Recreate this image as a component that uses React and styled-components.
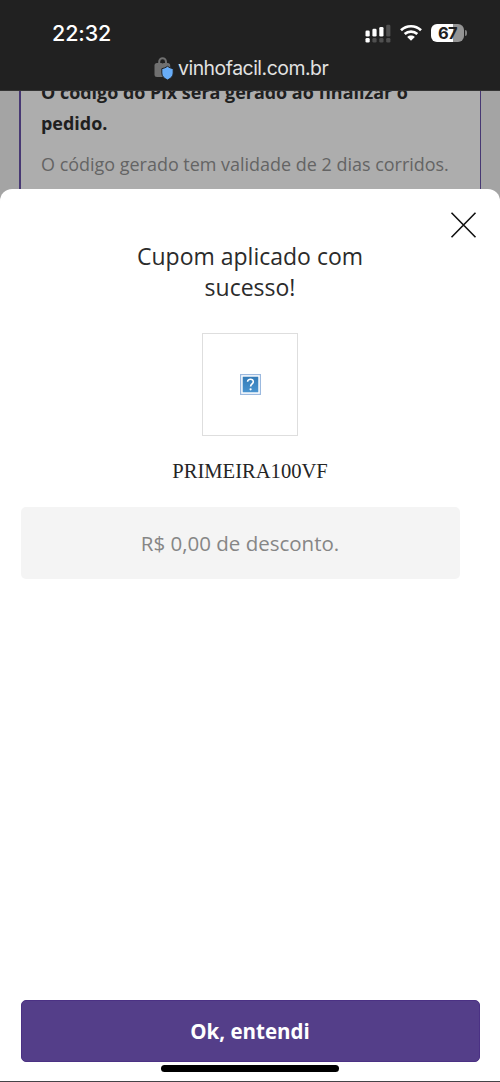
import React from "react";
import styled, { createGlobalStyle } from "styled-components";

const GlobalStyle = createGlobalStyle`
  * { box-sizing: border-box; }
  body { margin: 0; background: #fff; font-family: "Open Sans", sans-serif; }
  h2, p { margin: 0; }
`;

const Screen = styled.div`
  width: 500px;
  height: 1082px;
  display: flex;
  flex-direction: column;
  overflow: hidden;
  background: #a4a4a4;
  border-bottom: 1px solid #444347;
`;

const BrowserHeader = styled.header`
  flex: none;
  height: 91px;
  background: #212121;
  border-bottom: 1px solid #343434;
  font-family: Inter, sans-serif;
`;

const StatusBar = styled.div`
  height: 56px;
  padding: 10px 33px 0 52px;
  display: flex;
  justify-content: space-between;
  align-items: center;
`;

const Clock = styled.time`
  color: #fff;
  font-size: 21.5px;
  font-weight: 500;
  line-height: 26px;
  letter-spacing: -0.1px;
`;

const StatusIcons = styled.div`
  display: flex;
  align-items: center;
`;

const AddressBar = styled.div`
  height: 24px;
  padding-left: 154px;
  display: flex;
  align-items: center;
  gap: 4px;
  color: #e2e2e2;
  font-size: 19.4px;
  line-height: 24px;
  letter-spacing: -0.48px;
`;

const PageBehind = styled.main`
  flex: none;
  height: 98px;
  padding: 0 19px;
  overflow: hidden;
`;

const PaymentBox = styled.section`
  height: 120px;
  padding-left: 20px;
  border: solid #473873;
  border-width: 0 1px 0 2px;
  background: #adadad;
  white-space: nowrap;
`;

const PaymentTitle = styled.p`
  margin-top: -14px;
  color: #202020;
  font-size: 17.95px;
  font-weight: 700;
  line-height: 31px;
`;

const PaymentNote = styled.p`
  margin-top: 10px;
  color: #646464;
  font-size: 17.97px;
  line-height: 31px;
`;

const SheetArea = styled.div`
  flex: 1;
  background: linear-gradient(#a4a4a4 0 20px, #fff 20px);
`;

const Sheet = styled.section`
  position: relative;
  height: 100%;
  padding: 52px 20.5px 0;
  display: flex;
  flex-direction: column;
  align-items: center;
  border-radius: 12px 12px 0 0;
  background: #fff;
`;

const CloseButton = styled.button`
  position: absolute;
  top: 22px;
  right: 23px;
  padding: 0;
  border: 0;
  background: none;
  line-height: 0;
`;

const Title = styled.h2`
  color: #2b2b2b;
  font-size: 23px;
  font-weight: 400;
  line-height: 31px;
  text-align: center;
`;

const ImageFrame = styled.div`
  margin-top: 30px;
  width: 96px;
  height: 103px;
  display: flex;
  align-items: center;
  justify-content: center;
  border: 1px solid #dedede;
`;

const CouponCode = styled.p`
  margin-top: 22px;
  color: #252525;
  font-family: "Liberation Serif", serif;
  font-size: 20.6px;
  line-height: 26px;
`;

const Discount = styled.div`
  align-self: flex-start;
  margin-top: 23px;
  width: 439px;
  height: 72px;
  border-radius: 5px;
  background: #f4f4f4;
  color: #868686;
  font-size: 20.5px;
  line-height: 72px;
  text-align: center;
`;

const ConfirmButton = styled.button`
  margin-top: auto;
  width: 459px;
  height: 62px;
  flex: none;
  padding: 0;
  border: 1px solid #4b3184;
  border-radius: 5px;
  background: #543e89;
  color: #fff;
  font: 700 20.5px/60px "Open Sans", sans-serif;
`;

const HomeIndicator = styled.div`
  flex: none;
  width: 178px;
  height: 7px;
  margin: 3px 0 9px;
  border-radius: 4px;
  background: #000;
`;

const SignalIcon = () => (
  <svg width="26" height="20" viewBox="0 0 26 20">
    <g fill="#fff">
      <rect x="0.5" y="7.5" width="4.2" height="6" rx="1.3" />
      <rect x="7.4" y="5.8" width="4.2" height="7.7" rx="1.3" />
      <rect x="14.3" y="4" width="4.2" height="9.5" rx="1.3" />
      <rect x="0.5" y="15" width="4.2" height="4.6" rx="1.3" />
    </g>
    <g fill="#505050">
      <rect x="21.2" y="1.8" width="4.2" height="11.7" rx="1.3" />
      <rect x="7.4" y="15" width="4.2" height="4.6" rx="1.3" />
      <rect x="14.3" y="15" width="4.2" height="4.6" rx="1.3" />
      <rect x="21.2" y="15" width="4.2" height="4.6" rx="1.3" />
    </g>
  </svg>
);

const WifiGlyph = styled.svg`
  margin: 0 9px 0 9px;
`;

const WifiIcon = () => (
  <WifiGlyph width="22" height="18" viewBox="0 0 22 18">
    <g fill="none" stroke="#fff" strokeWidth="2.7">
      <path d="M1 6.3C6.6 .9 15.4 .9 21 6.3" />
      <path d="M4.7 10.1C8.2 6.9 13.8 6.9 17.3 10.1" />
    </g>
    <path fill="#fff" d="M7.2 12.9C9.3 11 12.7 11 14.8 12.9L11 16.8Z" />
  </WifiGlyph>
);

const BatteryShell = styled.div`
  display: flex;
  align-items: center;
  gap: 1px;
`;

const BatteryBody = styled.span`
  width: 33px;
  height: 18px;
  border-radius: 6px;
  background: linear-gradient(90deg, #fff 67%, #949494 67%);
  color: #202020;
  font-size: 16.5px;
  font-weight: 700;
  line-height: 18px;
  letter-spacing: -0.7px;
  text-align: center;
`;

const BatteryTip = styled.span`
  width: 2px;
  height: 6px;
  border-radius: 0 2px 2px 0;
  background: #808080;
`;

const PrivacyIcon = () => (
  <svg width="20" height="24" viewBox="0 0 20 24">
    <path d="M5.2 9V5.7a3.4 3.4 0 0 1 6.8 0V9" fill="none" stroke="#707070" strokeWidth="2" />
    <rect x="0.5" y="7" width="15.7" height="14" rx="2.5" fill="#707070" />
    <circle cx="8.6" cy="6.5" r="1.1" fill="#212121" />
    <path
      d="M13.5 10.3C11.8 11.6 10 12.3 7.8 12.7V17C7.8 20.4 10 22.2 13.5 24C17 22.2 19.2 20.4 19.2 17V12.7C17 12.3 15.2 11.6 13.5 10.3Z"
      fill="#68adf8" stroke="#212121" strokeWidth="1"
    />
  </svg>
);

const CloseIcon = () => (
  <svg width="27" height="27" viewBox="0 0 27 27" fill="none" stroke="#111" strokeWidth="1.6">
    <path d="M1.5 1.8L25.5 26.3M25.5 1.8L1.5 26.3" />
  </svg>
);

const MissingImageIcon = () => (
  <svg width="21" height="21" viewBox="0 0 21 21">
    <defs>
      <linearGradient id="tile" x1="0" y1="0" x2="0" y2="1">
        <stop stopColor="#347bb7" />
        <stop offset="1" stopColor="#4a94cf" />
      </linearGradient>
    </defs>
    <rect x="0.6" y="0.6" width="19.8" height="19.8" fill="#fff" stroke="#9bb9df" strokeWidth="1.2" />
    <rect x="2.7" y="2.7" width="15.6" height="15.6" fill="url(#tile)" />
    <path d="M7.6 7.7C7.6 4.3 13.5 4.4 13.3 7.9C13.2 10 10.6 10 10.6 12.6" fill="none" stroke="#fff" strokeWidth="1.6" />
    <circle cx="10.6" cy="15.3" r="1.1" fill="#fff" />
  </svg>
);

export default function App() {
  return (
    <Screen>
      <GlobalStyle />
      <BrowserHeader>
        <StatusBar>
          <Clock>22:32</Clock>
          <StatusIcons>
            <SignalIcon />
            <WifiIcon />
            <BatteryShell>
              <BatteryBody>67</BatteryBody>
              <BatteryTip />
            </BatteryShell>
          </StatusIcons>
        </StatusBar>
        <AddressBar>
          <PrivacyIcon />
          <span>vinhofacil.com.br</span>
        </AddressBar>
      </BrowserHeader>
      <PageBehind>
        <PaymentBox>
          <PaymentTitle>
            O código do Pix será gerado ao finalizar o<br />pedido.
          </PaymentTitle>
          <PaymentNote>O código gerado tem validade de 2 dias corridos.</PaymentNote>
        </PaymentBox>
      </PageBehind>
      <SheetArea>
        <Sheet role="dialog">
          <CloseButton aria-label="Fechar"><CloseIcon /></CloseButton>
          <Title>Cupom aplicado com<br />sucesso!</Title>
          <ImageFrame><MissingImageIcon /></ImageFrame>
          <CouponCode>PRIMEIRA100VF</CouponCode>
          <Discount>R$ 0,00 de desconto.</Discount>
          <ConfirmButton>Ok, entendi</ConfirmButton>
          <HomeIndicator />
        </Sheet>
      </SheetArea>
    </Screen>
  );
}
